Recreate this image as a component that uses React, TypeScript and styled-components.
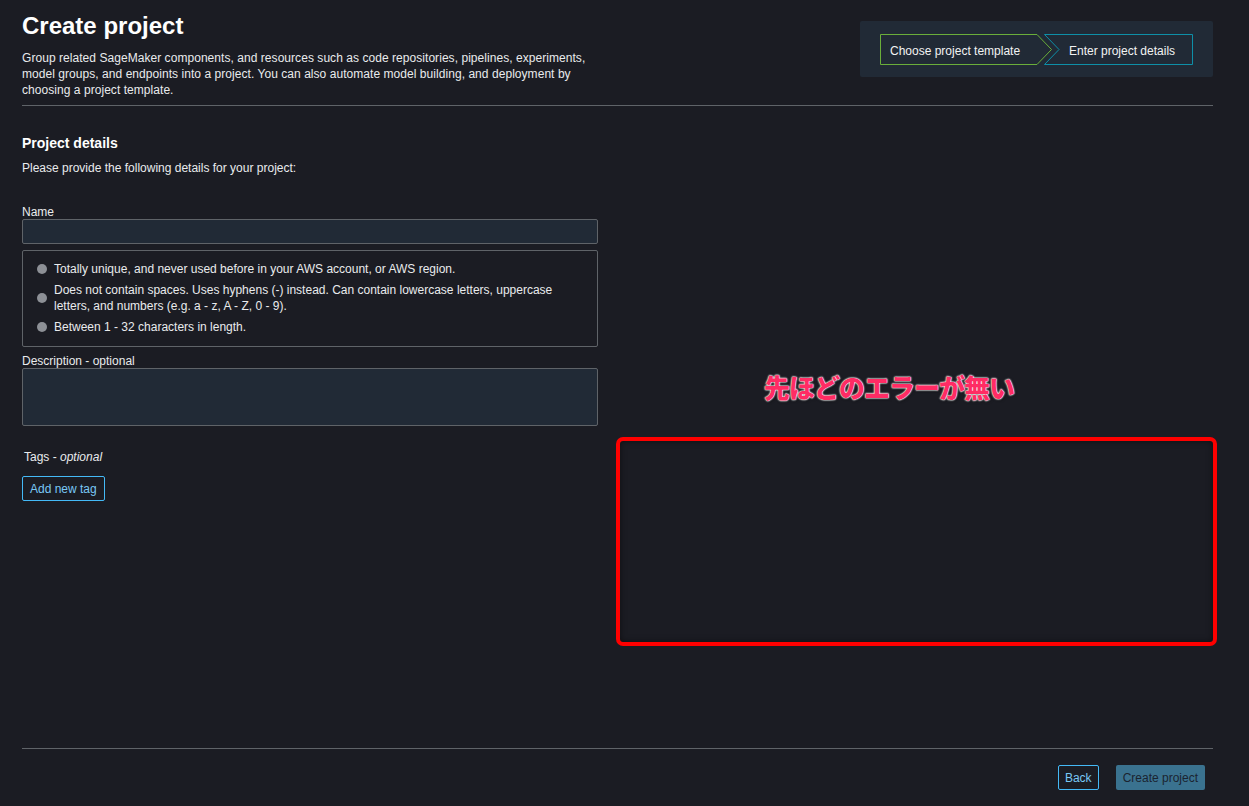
import React from "react";
import styled, { createGlobalStyle } from "styled-components";

const Global = createGlobalStyle`
  html, body { margin: 0; padding: 0; background: #1b1c23; }
  body { font-family: "Liberation Sans", "Noto Sans CJK JP", sans-serif; color: #e9ebed; }
  * { box-sizing: border-box; }
`;

const Page = styled.div`
  min-height: 100vh;
  display: flex;
  flex-direction: column;
  padding: 0 36px 16px 22px;
`;

const Header = styled.header`
  display: flex;
  justify-content: space-between;
  align-items: flex-start;
  padding-top: 12px;
  padding-bottom: 7px;
  border-bottom: 1px solid #5f6368;
`;

const HeaderText = styled.div`
  width: 590px;
`;

const Title = styled.h1`
  margin: 0 0 10px;
  font-size: 24px;
  line-height: 28px;
  font-weight: 700;
  color: #ffffff;
`;

const Lead = styled.p`
  margin: 0;
  font-size: 12px;
  line-height: 16px;
  letter-spacing: 0.05px;
  color: #e9ebed;
`;

const StepPanel = styled.div`
  margin-top: 9px;
  background: #212a36;
  border-radius: 2px;
  padding: 13px 20px 12px 20px;
  display: flex;
`;

const Step = styled.div<{ $w: number; $first?: boolean }>`
  position: relative;
  width: ${(p) => p.$w}px;
  height: 31px;
  display: flex;
  align-items: center;
  padding-top: 2px;
  padding-left: ${(p) => (p.$first ? 10 : 25)}px;
  margin-left: ${(p) => (p.$first ? 0 : -8)}px;
  font-size: 12px;
  color: #f2f3f3;
  svg { position: absolute; inset: 0; }
  span { position: relative; }
`;

const Main = styled.main`
  flex: 1;
  display: grid;
  grid-template-columns: 576px 601px;
  column-gap: 18px;
`;

const Form = styled.section`
  padding-top: 28px;
  display: flex;
  flex-direction: column;
`;

const SectionTitle = styled.h2`
  margin: 0 0 8px;
  font-size: 14px;
  line-height: 18px;
  font-weight: 700;
  color: #ffffff;
`;

const Hint = styled.p`
  margin: 0 0 29px;
  font-size: 12px;
  line-height: 16px;
`;

const Label = styled.label`
  display: block;
  font-size: 12px;
  line-height: 14px;
  margin-bottom: 0;
  em { font-style: italic; }
`;

const Input = styled.div<{ $h: number }>`
  height: ${(p) => p.$h}px;
  background: #212a36;
  border: 1px solid #5f6368;
  border-radius: 2px;
`;

const Rules = styled.ul`
  list-style: none;
  margin: 6px 0 7px;
  padding: 10px 14px 11px 14px;
  border: 1px solid #5f6368;
  border-radius: 2px;
  display: flex;
  flex-direction: column;
  gap: 5px;
`;

const Rule = styled.li`
  display: flex;
  align-items: center;
  gap: 7px;
  font-size: 12px;
  line-height: 16px;
  &::before {
    content: "";
    flex: none;
    width: 10px;
    height: 10px;
    border-radius: 50%;
    background: #8d9096;
  }
`;

const TagsLabel = styled(Label)`
  margin: 24px 0 12px 2px;
`;

const OutlineButton = styled.button`
  align-self: flex-start;
  height: 25px;
  padding: 0 7px;
  background: transparent;
  border: 1px solid #44b9f6;
  border-radius: 2px;
  color: #79c8f5;
  font-family: inherit;
  font-size: 12px;
`;

const Aside = styled.aside`
  display: flex;
  flex-direction: column;
  padding-top: 266px;
`;

const Note = styled.div`
  margin-left: 148px;
  font-family: "Noto Sans CJK JP", sans-serif;
  font-weight: 900;
  font-size: 26px;
  line-height: 30px;
  letter-spacing: -1px;
  color: #ff2c64;
  text-shadow: 0 0 2px #fff, 0 0 2px #fff, 0 0 1px #fff, 1px 1px 3px rgba(0,0,0,0.6);
`;

const Highlight = styled.div`
  margin-top: 35px;
  height: 209px;
  border: 4px solid #ff0000;
  border-radius: 7px;
  box-shadow: inset 0 0 6px rgba(0,0,0,0.5);
`;

const Footer = styled.footer`
  border-top: 1px solid #5f6368;
  padding-top: 16px;
  display: flex;
  justify-content: flex-end;
  gap: 17px;
  padding-right: 8px;
`;

const BackButton = styled(OutlineButton)`
  padding: 0 6px;
`;

const PrimaryButton = styled.button`
  height: 25px;
  padding: 0 7px;
  background: #3a728f;
  border: none;
  border-radius: 2px;
  color: #1b2430;
  font-family: inherit;
  font-size: 12px;
`;

export default function App() {
  return (
    <>
      <Global />
      <Page>
        <Header>
          <HeaderText>
            <Title>Create project</Title>
            <Lead>
              Group related SageMaker components, and resources such as code repositories, pipelines, experiments,
              model groups, and endpoints into a project. You can also automate model building, and deployment by
              choosing a project template.
            </Lead>
          </HeaderText>
          <StepPanel>
            <Step $w={172} $first>
              <svg width="172" height="31" viewBox="0 0 172 31">
                <path d="M0.5 0.5 H157 L171.5 15.5 L157 30.5 H0.5 Z" fill="none" stroke="#6aae3a" strokeWidth="1" />
              </svg>
              <span>Choose project template</span>
            </Step>
            <Step $w={149}>
              <svg width="149" height="31" viewBox="0 0 149 31">
                <path d="M0.5 0.5 H148.5 V30.5 H0.5 L15 15.5 Z" fill="none" stroke="#0e8fa8" strokeWidth="1" />
              </svg>
              <span>Enter project details</span>
            </Step>
          </StepPanel>
        </Header>
        <Main>
          <Form>
            <SectionTitle>Project details</SectionTitle>
            <Hint>Please provide the following details for your project:</Hint>
            <Label>Name</Label>
            <Input $h={25} />
            <Rules>
              <Rule>Totally unique, and never used before in your AWS account, or AWS region.</Rule>
              <Rule>
                Does not contain spaces. Uses hyphens (-) instead. Can contain lowercase letters, uppercase letters,
                and numbers (e.g. a - z, A - Z, 0 - 9).
              </Rule>
              <Rule>Between 1 - 32 characters in length.</Rule>
            </Rules>
            <Label>Description - optional</Label>
            <Input $h={58} />
            <TagsLabel>
              Tags - <em>optional</em>
            </TagsLabel>
            <OutlineButton>Add new tag</OutlineButton>
          </Form>
          <Aside>
            <Note>先ほどのエラーが無い</Note>
            <Highlight />
          </Aside>
        </Main>
        <Footer>
          <BackButton>Back</BackButton>
          <PrimaryButton>Create project</PrimaryButton>
        </Footer>
      </Page>
    </>
  );
}
